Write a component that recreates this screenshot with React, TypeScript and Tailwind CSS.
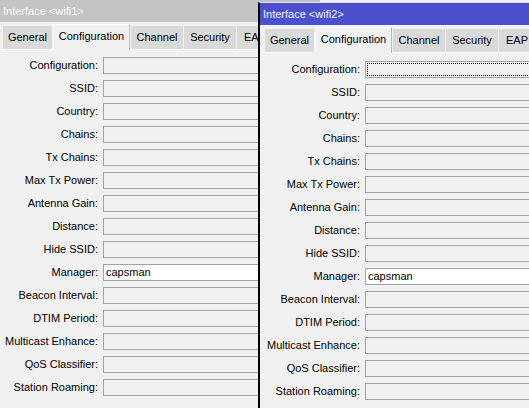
const fields = [
  "Configuration",
  "SSID",
  "Country",
  "Chains",
  "Tx Chains",
  "Max Tx Power",
  "Antenna Gain",
  "Distance",
  "Hide SSID",
  "Manager",
  "Beacon Interval",
  "DTIM Period",
  "Multicast Enhance",
  "QoS Classifier",
  "Station Roaming",
];

const tabs = [
  { name: "General", w: "w-[49px]" },
  { name: "Configuration", w: "w-[77px]" },
  { name: "Channel", w: "w-[52px]" },
  { name: "Security", w: "w-[52px]" },
  { name: "EAP", w: "w-[36px]" },
];

function Field({ label, focused }: { label: string; focused: boolean }) {
  const isManager = label === "Manager";
  return (
    <div className="flex items-center h-[17px]">
      <div className="w-[99px] shrink-0 text-right pr-[1px] whitespace-nowrap">
        {label}:
      </div>
      <div
        className={`ml-[4px] h-[17px] flex-1 border border-[#a3a3a3] relative flex items-center ${
          isManager ? "bg-white" : "bg-[#f0f0f0]"
        }`}
      >
        {isManager && <span className="pl-[2px]">capsman</span>}
        {focused && label === "Configuration" && (
          <div className="absolute inset-[1px] border border-dotted border-black" />
        )}
      </div>
    </div>
  );
}

function Window({
  title,
  active,
  extraTop,
}: {
  title: string;
  active: boolean;
  extraTop: boolean;
}) {
  return (
    <div className="flex flex-col h-full bg-[#f0f0f0]">
      <div
        className={`h-[22px] shrink-0 flex items-center pl-[3px] ${
          active ? "bg-[#4d50cc] text-[#f4f4ff]" : "bg-[#c4c4c4] text-[#fafafa]"
        }`}
      >
        {title}
      </div>
      <div className={active ? "pl-[2px]" : ""}>
        <div className="h-[28px] flex items-end pl-[3px] gap-[1px] border-b border-white">
          {tabs.map((t) =>
            t.name === "Configuration" ? (
              <div
                key={t.name}
                className={`${t.w} h-[26px] -mb-[1px] relative bg-[#f0f0f0] border-l border-t border-r border-l-white border-t-white border-r-[#bdbdbd] flex items-center justify-center pb-[3px]`}
              >
                {t.name}
              </div>
            ) : (
              <div
                key={t.name}
                className={`${t.w} h-[23px] bg-[#d9d9d9] flex items-center justify-center whitespace-nowrap overflow-hidden`}
              >
                {t.name}
              </div>
            )
          )}
        </div>
        <div
          className={`flex flex-col gap-[6px] ${
            extraTop ? "pt-[8px]" : "pt-[7px]"
          }`}
        >
          {fields.map((f) => (
            <Field key={f} label={f} focused={active} />
          ))}
        </div>
      </div>
    </div>
  );
}

export default function App() {
  return (
    <div
      className="relative w-[529px] h-[408px] overflow-hidden bg-[#f0f0f0] text-[11px] text-black"
      style={{ fontFamily: '"Liberation Sans", Arial, sans-serif' }}
    >
      <div className="absolute left-0 top-0 w-[320px] h-[408px]">
        <Window title="Interface <wifi1>" active={false} extraTop={false} />
      </div>
      <div className="absolute left-[258px] top-[2px] w-[320px] h-[420px] border-l-2 border-l-black border-t border-t-[#dcdcdc]">
        <Window title="Interface <wifi2>" active={true} extraTop={true} />
      </div>
    </div>
  );
}
